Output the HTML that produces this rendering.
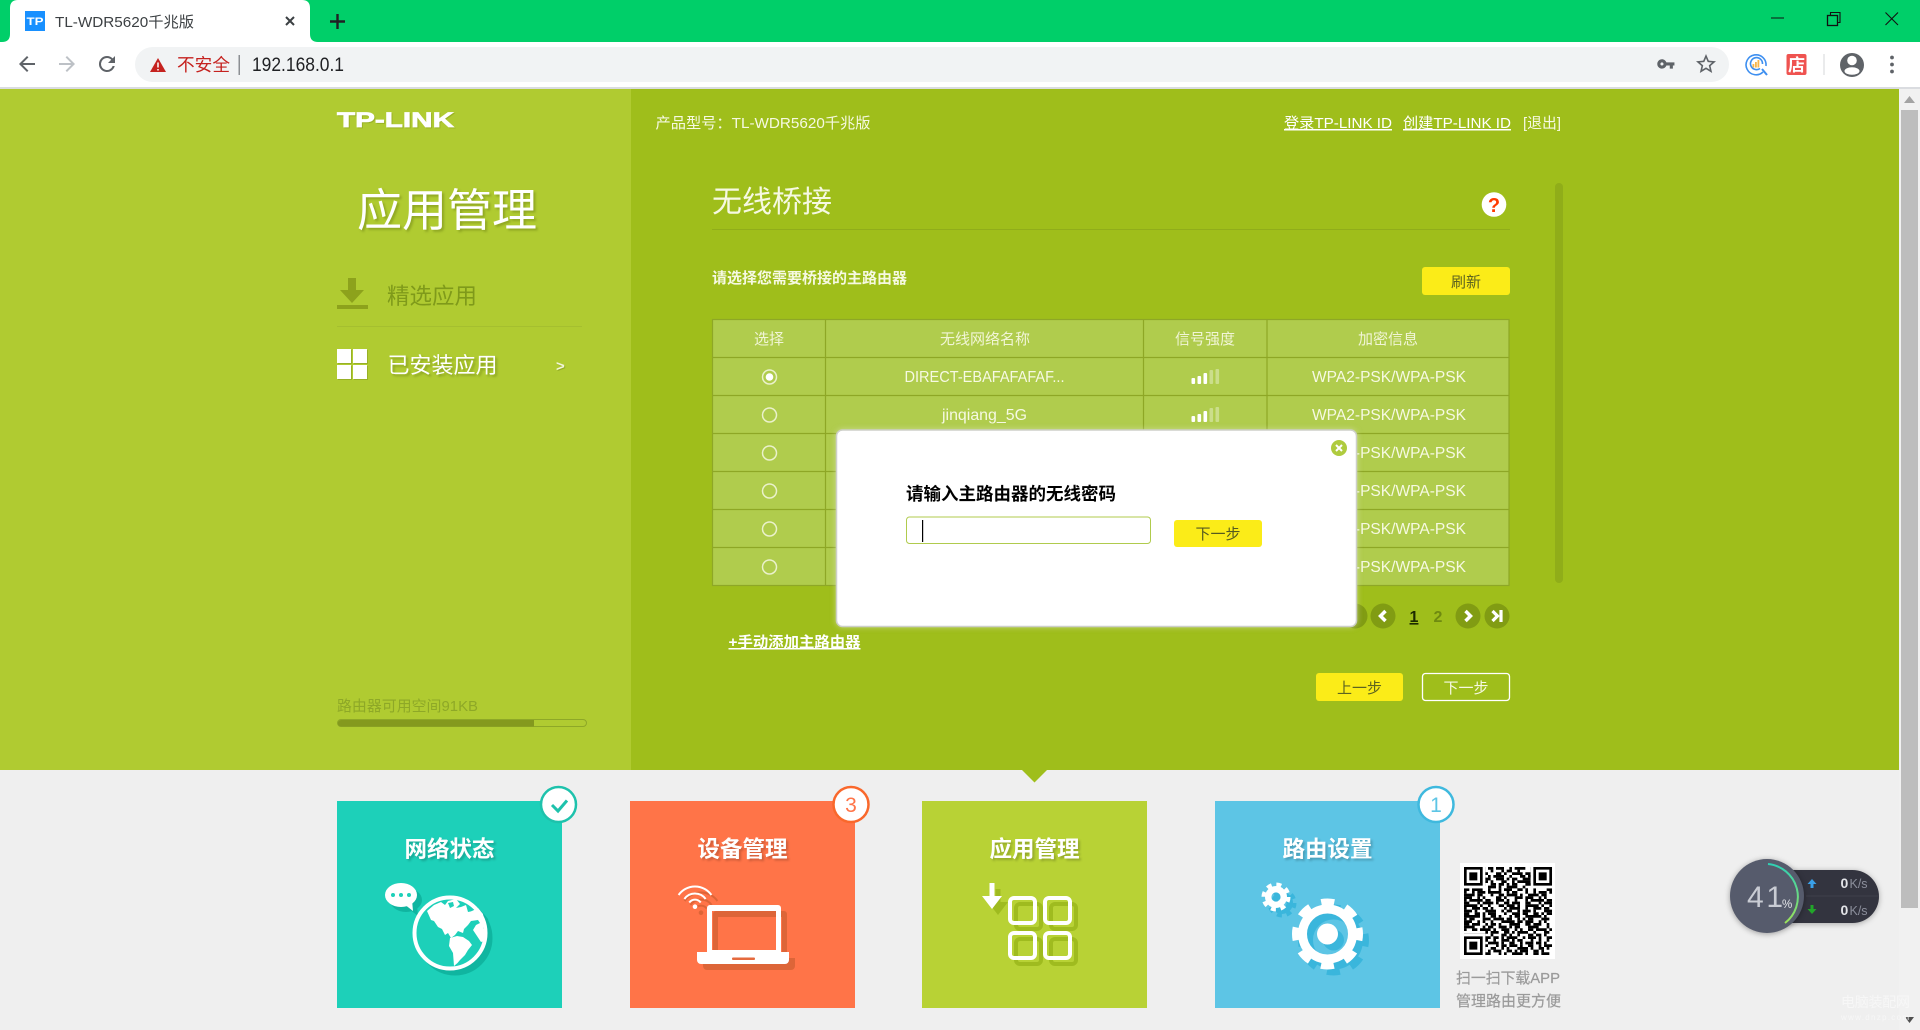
<!DOCTYPE html>
<html lang="zh-CN"><head><meta charset="utf-8"><title>TL-WDR5620千兆版</title>
<style>
html,body{margin:0;padding:0;width:1920px;height:1030px;overflow:hidden;background:#efefef}
svg{position:absolute;left:0;top:0;display:block}
text{font-family:"Liberation Sans","Noto Sans CJK SC",sans-serif;white-space:pre}
.m{text-anchor:middle}
.u{text-decoration:underline}
.b{font-weight:bold}
.ts{filter:drop-shadow(2px 2px 1px rgba(0,0,0,.2))}
.cell{fill:#f6f9e2;font-size:16px}
.hd{fill:#f1f5d6;font-size:15px;text-anchor:middle}
</style></head><body>
<svg width="1920" height="1030" viewBox="0 0 1920 1030" xmlns="http://www.w3.org/2000/svg">
<!-- chrome -->
<rect width="1920" height="42" fill="#00cf69"/>
<rect y="42" width="1920" height="45" fill="#fff"/>
<rect y="87" width="1920" height="2" fill="#dadce0"/>
<path d="M2 42Q10 42 10 34V8Q10 0 18 0H302Q310 0 310 8V34Q310 42 318 42Z" fill="#fff"/>
<rect x="25" y="11" width="20" height="20" fill="#1890ff"/>
<text x="26.500" y="25" class="b" font-size="11" fill="#fff" textLength="17" lengthAdjust="spacingAndGlyphs">TP</text>
<text x="55" y="27" font-size="15" fill="#3c4043" textLength="139" lengthAdjust="spacingAndGlyphs">TL-WDR5620千兆版</text>
<path d="M286 17L294 25M294 17L286 25" stroke="#3c4043" stroke-width="2"/>
<path d="M337.500 14V29M330 21.500H345" stroke="#202124" stroke-width="2.400"/>
<path d="M1771 18H1784" stroke="#111" stroke-width="1"/>
<rect x="1827.500" y="15.500" width="10" height="10" fill="none" stroke="#111" stroke-width="1.300"/>
<path d="M1830.500 15V12.500H1840V22.500H1838" fill="none" stroke="#111" stroke-width="1.100"/>
<path d="M1885.500 12.500L1898 25M1898 12.500L1885.500 25" stroke="#111" stroke-width="1.100"/>
<path transform="translate(15,52)" fill="#5f6368" d="M20 11H7.830l5.590-5.590L12 4l-8 8 8 8 1.410-1.410L7.830 13H20v-2z"/>
<path transform="translate(55,52)" fill="#bdc1c6" d="M12 4l-1.410 1.410L16.170 11H4v2h12.170l-5.580 5.590L12 20l8-8z"/>
<path transform="translate(95,52)" fill="#5f6368" d="M17.650 6.350A7.950 7.950 0 0 0 12 4a8 8 0 1 0 7.730 10h-2.080A6 6 0 1 1 12 6c1.660 0 3.140.69 4.220 1.780L13 11h7V4l-2.350 2.350z"/>
<path d="M152.500 47H1711.500A17.500 17.500 0 0 1 1711.500 82H152.500A17.500 17.500 0 0 1 152.500 47Z" fill="#f1f3f4"/>
<path d="M158 58L166 72H150Z" fill="#c5221f"/>
<path d="M158 62.500V67.500M158 69V70.500" stroke="#fff" stroke-width="1.500"/>
<text x="177" y="71" font-size="17.500" fill="#c5221f" textLength="53" lengthAdjust="spacingAndGlyphs">不安全</text>
<rect x="238.500" y="55" width="1.500" height="20" fill="#8c8f93"/>
<text x="252" y="71" font-size="19" fill="#202124" textLength="92" lengthAdjust="spacingAndGlyphs">192.168.0.1</text>
<path transform="translate(1656.500,54.600) scale(.78)" fill="#5f6368" d="M12.650 10C11.830 7.670 9.610 6 7 6c-3.310 0-6 2.690-6 6s2.690 6 6 6c2.610 0 4.830-1.670 5.650-4H17v4h4v-4h2v-4H12.650zM7 14c-1.100 0-2-.9-2-2s.9-2 2-2 2 .9 2 2-.9 2-2 2z"/>
<path transform="translate(1694,52)" fill="#5f6368" d="M22 9.240l-7.190-.62L12 2 9.190 8.630 2 9.240l5.460 4.730L5.820 21 12 17.270 18.180 21l-1.630-7.030L22 9.240zM12 15.400l-3.760 2.270 1-4.280-3.320-2.880 4.380-.38L12 6.100l1.710 4.040 4.380.38-3.320 2.880 1 4.280L12 15.400z"/>
<g fill="none" stroke="#3d8ff0" stroke-width="1.600">
<path d="M1763 72A10 10 0 1 1 1766 66"/><path d="M1760 68.500A6 6 0 1 1 1762.500 64"/><path d="M1762 69L1767 75" stroke-width="2"/>
</g>
<rect x="1752.500" y="64" width="1.800" height="3.500" fill="#f7b54a"/><rect x="1755" y="62" width="1.800" height="5.500" fill="#f7b54a"/><rect x="1757.500" y="60" width="1.800" height="7.500" fill="#f7b54a"/>
<rect x="1786.500" y="54" width="20" height="21" rx="2" fill="#ef5350"/>
<text x="1796.500" y="71" class="m b" font-size="17" fill="#fff">店</text>
<rect x="1823.500" y="54" width="1" height="21" fill="#d5d7da"/>
<circle cx="1852" cy="65" r="12" fill="#5f6368"/><circle cx="1852" cy="60.500" r="4.800" fill="#fff"/><ellipse cx="1852" cy="71" rx="7.500" ry="3.800" fill="#fff"/>
<circle cx="1892" cy="57.500" r="1.900" fill="#5f6368"/><circle cx="1892" cy="64.500" r="1.900" fill="#5f6368"/><circle cx="1892" cy="71.500" r="1.900" fill="#5f6368"/>
<!-- page bg -->
<rect y="89" width="631" height="681" fill="#b0cb31"/>
<rect x="631" y="89" width="1268" height="681" fill="#9fbe1b"/>
<rect x="0" y="770" width="1899" height="260" fill="#efefef"/>
<path d="M1022 770H1047L1034.500 782.500Z" fill="#9fbe1b"/>
<rect x="1899" y="89" width="21" height="941" fill="#f1f1f1"/>
<rect x="1901" y="110" width="17" height="798" fill="#bdbdbd"/>
<path d="M1909.500 96L1915 103H1904Z" fill="#a3a3a3"/>
<path d="M1905 1017H1914L1909.500 1023Z" fill="#505050"/>
<!-- left panel -->
<text x="337" y="127" class="b" font-size="21" fill="#fff" stroke="#fff" stroke-width=".7" textLength="117" lengthAdjust="spacingAndGlyphs" style="filter:drop-shadow(1px 1px 0 rgba(120,140,20,.4))">TP-LINK</text>
<text x="357" y="226" font-size="45" fill="#fff" textLength="180" style="filter:drop-shadow(2px 2px 1px rgba(110,130,20,.5))">应用管理</text>
<path d="M348 278H356V290H364L352 303L340 290H348Z" fill="#8da21c"/><rect x="337" y="305" width="31" height="4" fill="#8da21c"/>
<text x="387" y="304" font-size="22.500" fill="#7f9a1a" textLength="90">精选应用</text>
<rect x="337" y="326" width="245" height="1" fill="#a5bf2f"/>
<g fill="#fff" style="filter:drop-shadow(1px 1px 0 rgba(110,130,20,.35))">
<rect x="337" y="349" width="14" height="14"/><rect x="353" y="349" width="14" height="14"/><rect x="337" y="365" width="14" height="14"/><rect x="353" y="365" width="14" height="14"/>
</g>
<text x="387.500" y="373" font-size="22" fill="#fff" textLength="110" style="filter:drop-shadow(2px 2px 1px rgba(110,130,20,.55))">已安装应用</text>
<text x="556" y="371" class="b" font-size="15" fill="#f2f6d8" style="filter:drop-shadow(1px 1px 0 rgba(110,130,20,.4))">&gt;</text>
<text x="337" y="711" font-size="15" fill="#8ea827" textLength="141" lengthAdjust="spacingAndGlyphs">路由器可用空间91KB</text>
<rect x="337.500" y="719.500" width="249" height="7" rx="3.500" fill="none" stroke="#8ea827" stroke-width="1"/>
<path d="M341 720H534V726.500H341A3.200 3.200 0 0 1 341 720Z" fill="#84991e"/>
<!-- header -->
<text x="655.500" y="128" font-size="15" fill="#f6f9e2" textLength="215" lengthAdjust="spacingAndGlyphs">产品型号：TL-WDR5620千兆版</text>
<text x="1284" y="128" font-size="15" fill="#fff" class="u" textLength="108" lengthAdjust="spacingAndGlyphs">登录TP-LINK ID</text>
<text x="1403" y="128" font-size="15" fill="#fff" class="u" textLength="108" lengthAdjust="spacingAndGlyphs">创建TP-LINK ID</text>
<text x="1523" y="128" font-size="15" fill="#f6f9e2" textLength="38" lengthAdjust="spacingAndGlyphs">[退出]</text>
<text x="712" y="212" font-size="30" fill="#f6f9e2" textLength="120">无线桥接</text>
<rect x="712" y="229" width="798" height="1" fill="#90ad1a"/>
<circle cx="1494" cy="204.500" r="12.300" fill="#fff"/>
<text x="1494" y="212" class="m b" font-size="20" fill="#ff3a00">?</text>
<rect x="1555" y="183" width="8" height="400" rx="4" fill="#90ad19"/>
<text x="712" y="283" class="b" font-size="15" fill="#f6f9e2" textLength="195" lengthAdjust="spacingAndGlyphs">请选择您需要桥接的主路由器</text>
<rect x="1422" y="267" width="88" height="28" rx="3" fill="#fbec18"/>
<text x="1466" y="287" class="m" font-size="15" fill="#5d6420">刷新</text>
<!-- table -->
<rect x="712.500" y="319.500" width="796.500" height="266" fill="#b0cc4d" stroke="#8ea726" stroke-width="1.200"/>
<g stroke="#8ea726" stroke-width="1.200">
<path d="M712 357.500H1509M712 395.500H1509M712 433.500H1509M712 471.500H1509M712 509.500H1509M712 547.500H1509"/>
<path d="M825.500 319V585M1143.500 319V585M1267 319V585"/>
</g>
<text x="769" y="344" class="hd">选择</text>
<text x="985" y="344" class="hd">无线网络名称</text>
<text x="1205" y="344" class="hd">信号强度</text>
<text x="1388" y="344" class="hd">加密信息</text>
<text x="904.500" y="382" class="cell" textLength="160" lengthAdjust="spacingAndGlyphs">DIRECT-EBAFAFAFAF...</text>
<text x="942" y="420" class="cell" textLength="85" lengthAdjust="spacingAndGlyphs">jinqiang_5G</text>
<g class="cell">
<text x="1312" y="382" class="cell" textLength="154" lengthAdjust="spacingAndGlyphs">WPA2-PSK/WPA-PSK</text>
<text x="1312" y="420" class="cell" textLength="154" lengthAdjust="spacingAndGlyphs">WPA2-PSK/WPA-PSK</text>
<text x="1312" y="458" class="cell" textLength="154" lengthAdjust="spacingAndGlyphs">WPA2-PSK/WPA-PSK</text>
<text x="1312" y="496" class="cell" textLength="154" lengthAdjust="spacingAndGlyphs">WPA2-PSK/WPA-PSK</text>
<text x="1312" y="534" class="cell" textLength="154" lengthAdjust="spacingAndGlyphs">WPA2-PSK/WPA-PSK</text>
<text x="1312" y="572" class="cell" textLength="154" lengthAdjust="spacingAndGlyphs">WPA2-PSK/WPA-PSK</text>
</g>
<g fill="none" stroke="#eaf1cb" stroke-width="1.500">
<circle cx="769.500" cy="377" r="7"/><circle cx="769.500" cy="415" r="7"/><circle cx="769.500" cy="453" r="7"/><circle cx="769.500" cy="491" r="7"/><circle cx="769.500" cy="529" r="7"/><circle cx="769.500" cy="567" r="7"/>
</g>
<circle cx="769.500" cy="377" r="3.800" fill="#fff"/>
<g fill="#fff" transform="translate(.5,0)">
<rect x="1191" y="378" width="3.600" height="6" rx="1"/><rect x="1197" y="376" width="3.600" height="8" rx="1"/><rect x="1203" y="373" width="3.600" height="11" rx="1"/>
<rect x="1209" y="370" width="3.600" height="14" rx="1" opacity=".35"/><rect x="1215" y="369" width="3.600" height="15" rx="1" opacity=".35"/>
<rect x="1191" y="416" width="3.600" height="6" rx="1"/><rect x="1197" y="414" width="3.600" height="8" rx="1"/><rect x="1203" y="411" width="3.600" height="11" rx="1"/>
<rect x="1209" y="408" width="3.600" height="14" rx="1" opacity=".35"/><rect x="1215" y="407" width="3.600" height="15" rx="1" opacity=".35"/>
</g>
<!-- pagination -->
<circle cx="1355" cy="616" r="12.500" fill="#819c13"/>
<circle cx="1383" cy="616" r="12.500" fill="#819c13"/>
<path d="M1385.500 611L1380.500 616L1385.500 621" fill="none" stroke="#fff" stroke-width="3.500"/>
<text x="1414" y="622" class="m b u" font-size="16" fill="#1c2a00">1</text>
<text x="1438" y="622" class="m b" font-size="16" fill="#6f8a10">2</text>
<circle cx="1468" cy="616" r="12.500" fill="#819c13"/>
<path d="M1465.500 611L1470.500 616L1465.500 621" fill="none" stroke="#fff" stroke-width="3.500"/>
<circle cx="1497" cy="616" r="12.500" fill="#819c13"/>
<path d="M1492.500 611L1497.500 616L1492.500 621M1501 610V622" fill="none" stroke="#fff" stroke-width="3.200"/>
<text x="728.500" y="647" class="b u" font-size="15" fill="#fff" textLength="132" lengthAdjust="spacingAndGlyphs">+手动添加主路由器</text>
<rect x="1316" y="673" width="87" height="28" rx="3" fill="#fbec18"/>
<text x="1359.500" y="693" class="m" font-size="15" fill="#5d6420">上一步</text>
<rect x="1422.500" y="673.500" width="87" height="27" rx="3" fill="none" stroke="#fff" stroke-width="1.300"/>
<text x="1466" y="693" class="m" font-size="15" fill="#f6f9e2">下一步</text>
<!-- modal -->
<rect x="836.500" y="430" width="520" height="196.500" rx="6" fill="#fff" stroke="#cdcfc8" stroke-width="1.500" style="filter:drop-shadow(0 0 3px rgba(225,232,200,.55))"/>
<circle cx="1339" cy="448" r="8" fill="#afcb3e"/>
<path d="M1336 445L1342 451M1342 445L1336 451" stroke="#fff" stroke-width="2"/>
<text x="906" y="500" class="b" font-size="17.500" fill="#000" textLength="210" lengthAdjust="spacingAndGlyphs">请输入主路由器的无线密码</text>
<rect x="906.500" y="517" width="244" height="26.500" rx="3" fill="#fff" stroke="#b0cb4d" stroke-width="1"/>
<rect x="922" y="520" width="1.200" height="22" fill="#000"/>
<rect x="1174" y="520" width="88" height="27" rx="3" fill="#fbec18"/>
<text x="1218" y="539" class="m" font-size="15" fill="#555a20">下一步</text>
<!-- cards -->
<rect x="337" y="801" width="225" height="207" fill="#1dd0b9"/>
<rect x="630" y="801" width="225" height="207" fill="#ff7448"/>
<rect x="922" y="801" width="225" height="207" fill="#b8d235"/>
<rect x="1215" y="801" width="225" height="207" fill="#5dc5e5"/>
<circle cx="558.500" cy="804.500" r="17.500" fill="#fff" stroke="#1ec2ac" stroke-width="2.500"/>
<path d="M552 805L558 811L567 800.500" fill="none" stroke="#1ec2ac" stroke-width="3"/>
<circle cx="851" cy="804.500" r="17.500" fill="#fff" stroke="#f9682c" stroke-width="2.500"/>
<text x="851" y="812" class="m" font-size="21" fill="#ff7448">3</text>
<circle cx="1436" cy="804.500" r="17.500" fill="#fff" stroke="#3fb9de" stroke-width="2.500"/>
<text x="1436" y="812" class="m" font-size="21" fill="#5dc5e5">1</text>
<text x="449.500" y="857" class="m b ts" font-size="22.500" fill="#fff">网络状态</text>
<text x="742.500" y="857" class="m b ts" font-size="22.500" fill="#fff">设备管理</text>
<text x="1034.500" y="857" class="m b ts" font-size="22.500" fill="#fff">应用管理</text>
<text x="1327.500" y="857" class="m b ts" font-size="22.500" fill="#fff">路由设置</text>
<!-- globe -->
<g style="filter:drop-shadow(5px 5px 0 #10b5a0)">
<ellipse cx="401" cy="895" rx="16" ry="12" fill="#fff"/>
<path d="M404 904L413 911L412 900Z" fill="#fff"/>
<circle cx="450" cy="933" r="35.500" fill="#1dd0b9" stroke="#fff" stroke-width="4"/>
<path d="M427 911L434 905L441 902L445 905L448 901L456 899L460 904L456 908L461 907L466 905L468 912L473 911L477 913L478 920L471 921L468 925L464 929L463 933L458 931L455 935L451 938L448 933L445 935L442 929L438 927L434 921L431 920Z" fill="#fff"/>
<path d="M448 903L453 902L454 906L450 908Z" fill="#1dd0b9"/>
<path d="M450 938L457 936L463 937L469 941L472 945L468 950L465 955L460 960L457.500 963L454 966L453 953L449 946Z" fill="#fff"/>
<path d="M470 912L478 908L483 914L484 922L483 928L486 935L484 941L481 942L477 936L473 930L476 925L480 923L476 917Z" fill="#fff"/>
</g>
<circle cx="393" cy="895" r="2" fill="#1dd0b9"/><circle cx="401" cy="895" r="2" fill="#1dd0b9"/><circle cx="409" cy="895" r="2" fill="#1dd0b9"/>
<!-- laptop -->
<g style="filter:drop-shadow(6px 6px 0 #dd6538)">
<g fill="none" stroke="#fff" stroke-width="2"><path d="M678.600 895A20 20 0 0 1 711.400 895"/><path d="M684.400 899A13 13 0 0 1 705.600 899"/><path d="M689.300 902.500A7 7 0 0 1 700.700 902.500"/></g>
<circle cx="695" cy="906.700" r="2.300" fill="#fff"/>
<path fill-rule="evenodd" fill="#fff" d="M710 905H778A3 3 0 0 1 781 908V952H789V960A4 4 0 0 1 785 964H701A4 4 0 0 1 697 960V952H707V908A3 3 0 0 1 710 905ZM712 911V950H776V911Z"/>
</g>
<rect x="732" y="957.500" width="23" height="2.500" rx="1" fill="#e56a3e"/>
<!-- apps -->
<g style="filter:drop-shadow(6px 6px 0 #9fbb1f)">
<path d="M989.500 883H994.500V896H1002L992 909L982 896H989.500Z" fill="#fff"/>
<g fill="none" stroke="#fff" stroke-width="4">
<rect x="1010" y="898" width="25" height="25" rx="4"/><rect x="1045" y="898" width="25" height="25" rx="4"/>
<rect x="1010" y="933" width="25" height="25" rx="4"/><rect x="1045" y="933" width="25" height="25" rx="4"/>
</g></g>
<!-- gears -->
<g style="filter:drop-shadow(6px 6px 0 #3ab6dc)">
<g fill="none" stroke="#fff">
<circle cx="1276" cy="897" r="7.800" stroke-width="6.400"/>
<circle cx="1276" cy="897" r="12.500" stroke-width="4" stroke-dasharray="5 4.817"/>
<circle cx="1327.500" cy="934" r="25" stroke-width="9"/>
<circle cx="1327.500" cy="934" r="32" stroke-width="7" stroke-dasharray="13 12.133" stroke-dashoffset="6.500"/>
</g>
<circle cx="1327.500" cy="934" r="10.500" fill="#fff"/>
</g>
<!-- qr -->
<rect x="1460" y="863" width="95" height="96" fill="#fff"/>
<g transform="translate(1464,867) scale(2.667)" fill="none" stroke="#000" stroke-width="1.030">
<path d="M0 .5h33" stroke-dasharray="8 1 2 1 3 2 1 1 4 2"/>
<path d="M0 1.500h33" stroke-dasharray="8 2 1 3 1 1 2 2 1 4"/>
<path d="M0 2.500h33" stroke-dasharray="9 3 2 1 1 2 4 1 2 2"/>
<path d="M0 3.500h33" stroke-dasharray="8 1 1 1 4 2 1 3 2 1"/>
<path d="M0 4.500h33" stroke-dasharray="10 2 3 1 1 1 2 2 3 2"/>
<path d="M0 5.500h33" stroke-dasharray="9 1 1 3 2 2 1 1 5 1"/>
<path d="M0 6.500h33" stroke-dasharray="8 2 2 1 2 1 1 1 2 3 3"/>
<path d="M0 7.500h33" stroke-dasharray="0 9 3 1 1 2 4 2 1 1"/>
<path d="M0 8.500h33" stroke-dasharray="2 1 4 2 1 3 1 1 3 2 2 1 1"/>
<path d="M0 9.500h33" stroke-dasharray="1 2 1 1 3 1 5 2 1 1 2 3"/>
<path d="M0 10.500h33" stroke-dasharray="4 1 2 3 1 2 2 1 4 1 1 2"/>
<path d="M0 11.500h33" stroke-dasharray="3 2 1 1 1 4 2 1 1 3 3 1"/>
<path d="M0 12.500h33" stroke-dasharray="1 1 5 1 2 2 3 1 1 2 1 3"/>
<path d="M0 13.500h33" stroke-dasharray="2 3 1 1 4 1 1 2 2 1 3 2"/>
<path d="M0 14.500h33" stroke-dasharray="5 1 1 2 1 3 2 1 3 1 1 2"/>
<path d="M0 15.500h33" stroke-dasharray="1 2 3 1 2 1 1 4 1 1 4 2"/>
<path d="M0 16.500h33" stroke-dasharray="3 1 1 3 4 2 1 1 2 2 1 1"/>
<path d="M0 17.500h33" stroke-dasharray="2 2 2 1 1 1 3 3 1 2 3 1"/>
<path d="M0 18.500h33" stroke-dasharray="6 1 1 2 2 1 1 3 1 1 2 2"/>
<path d="M0 19.500h33" stroke-dasharray="1 1 2 3 3 1 4 1 2 2 1 1"/>
<path d="M0 20.500h33" stroke-dasharray="3 2 1 1 1 2 1 3 5 1 2 1"/>
<path d="M0 21.500h33" stroke-dasharray="2 1 3 2 1 1 2 1 1 3 4 2"/>
<path d="M0 22.500h33" stroke-dasharray="4 3 1 1 2 2 3 1 1 1 2 3"/>
<path d="M0 23.500h33" stroke-dasharray="1 2 2 1 4 1 1 2 3 2 1 1"/>
<path d="M0 24.500h33" stroke-dasharray="0 8 1 1 3 2 2 1 1 1 4 2 1 3 2 1"/>
<path d="M0 25.500h33" stroke-dasharray="8 2 1 3 2 1 1 2 1 3 2 1 2 1 1 2"/>
<path d="M0 26.500h33" stroke-dasharray="10 1 2 1 1 1 4 2 1 1 3 1 1 2 2 1"/>
<path d="M0 27.500h33" stroke-dasharray="9 2 1 2 3 1 1 1 2 3 1 2 1 2 1 1"/>
<path d="M0 28.500h33" stroke-dasharray="8 1 4 1 1 2 2 2 1 1 3 1 2 1 1 2"/>
<path d="M0 29.500h33" stroke-dasharray="9 3 1 1 2 1 3 1 1 2 2 2 1 1 3 1"/>
<path d="M0 30.500h33" stroke-dasharray="8 2 2 2 1 1 1 3 4 1 1 2 2 1 1 2"/>
<path d="M0 31.500h33" stroke-dasharray="8 1 1 1 3 2 2 1 1 1 3 2 2 1 1 3"/>
<path d="M0 32.500h33" stroke-dasharray="10 3 1 1 1 2 4 1 1 2 2 1 3 1"/>
</g>
<g transform="translate(1464,867) scale(2.667)">
<rect x="0" y="0" width="8" height="8" fill="#fff"/><rect x="25" y="0" width="8" height="8" fill="#fff"/><rect x="0" y="25" width="8" height="8" fill="#fff"/>
<path fill-rule="evenodd" d="M0 0H7V7H0ZM1 1V6H6V1ZM2 2H5V5H2Z"/>
<path fill-rule="evenodd" transform="translate(26,0)" d="M0 0H7V7H0ZM1 1V6H6V1ZM2 2H5V5H2Z"/>
<path fill-rule="evenodd" transform="translate(0,26)" d="M0 0H7V7H0ZM1 1V6H6V1ZM2 2H5V5H2Z"/>
</g>
<text x="1456" y="983" font-size="15" fill="#9a9a9a" stroke="#9a9a9a" stroke-width=".2" textLength="104" lengthAdjust="spacingAndGlyphs" style="filter:blur(.3px)">扫一扫下载APP</text>
<text x="1456" y="1006" font-size="15" fill="#9a9a9a" stroke="#9a9a9a" stroke-width=".2" textLength="105" style="filter:blur(.3px)">管理路由更方便</text>
<!-- speed widget -->
<rect x="1760" y="870" width="119" height="53" rx="26.500" fill="#33343f" style="filter:drop-shadow(0 1px 3px rgba(0,0,0,.3))"/>
<rect x="1806" y="895.500" width="73" height="1" fill="#3f404b"/>
<circle cx="1767" cy="896" r="37" fill="#565b6c" style="filter:drop-shadow(0 1px 3px rgba(0,0,0,.35))"/>
<defs><linearGradient id="arc" x1="0" y1="0" x2="0" y2="1"><stop offset="0" stop-color="#2fd0b4"/><stop offset="1" stop-color="#9be25b"/></linearGradient></defs>
<path d="M1768 864A33 33 0 0 1 1785 923" fill="none" stroke="url(#arc)" stroke-width="2"/>
<text x="1747" y="907" font-size="30" fill="#c9ccd4" textLength="36">41</text>
<text x="1782" y="908" font-size="11.500" fill="#e2e4e8">%</text>
<path d="M1812 879L1816.500 884H1813.500V888H1810.500V884H1807.500Z" fill="#3aa0e8"/>
<path d="M1812 914L1816.500 909H1813.500V905H1810.500V909H1807.500Z" fill="#22a52a"/>
<text x="1840.500" y="888" class="b" font-size="14" fill="#e3e4e8">0</text>
<text x="1849.500" y="888" font-size="12.500" fill="#8b8e9b">K/s</text>
<text x="1840.500" y="915" class="b" font-size="14" fill="#e3e4e8">0</text>
<text x="1849.500" y="915" font-size="12.500" fill="#8b8e9b">K/s</text>
<text x="1841" y="1007" font-size="14" fill="#f7f7f7" textLength="69">电脑装配网</text>
<text x="1841" y="1020" font-size="8" fill="#f7f7f7" textLength="68">www.dnzp.com</text>
</svg>
</body></html>
